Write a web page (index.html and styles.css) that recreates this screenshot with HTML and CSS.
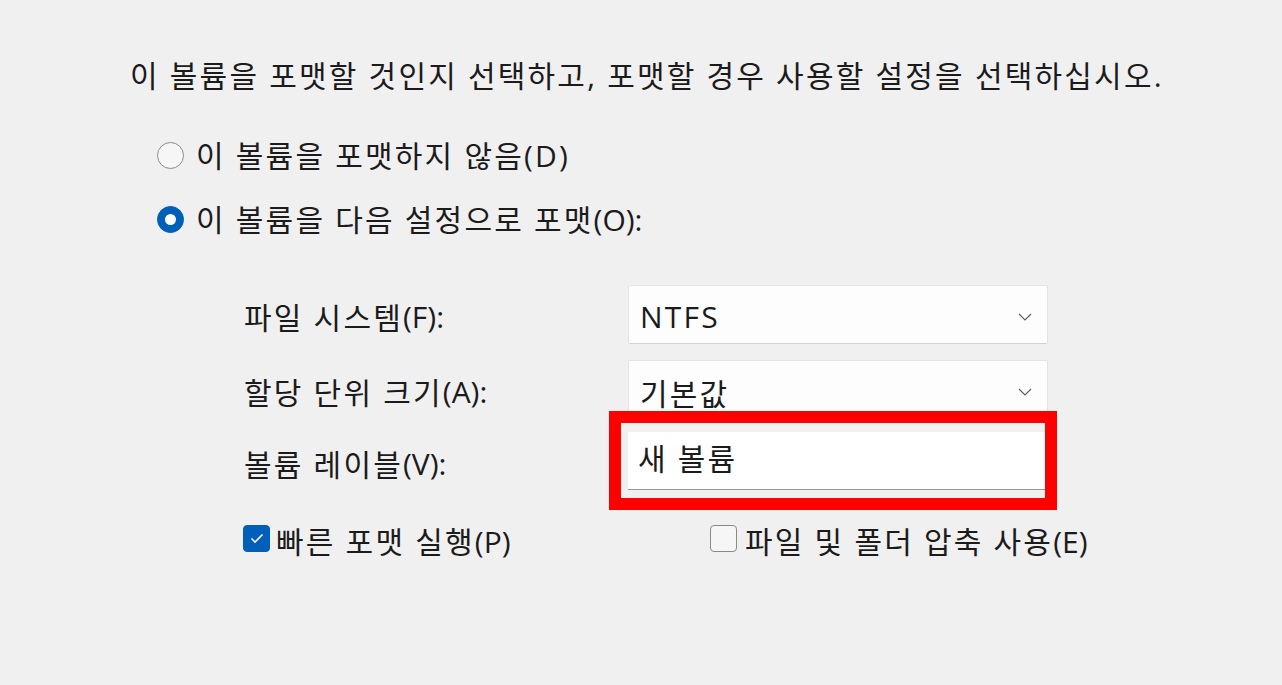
FILE: index.html
```html
<!DOCTYPE html>
<html lang="ko">
<head>
    <meta charset="UTF-8">
    <meta name="viewport" content="width=device-width, initial-scale=1.0">
    <title>파티션 포맷</title>
    <link rel="stylesheet" href="styles.css">
</head>
<body>
    <div class="page">
        <p class="intro">이 볼륨을 포맷할 것인지 선택하고, 포맷할 경우 사용할 설정을 선택하십시오.</p>

        <div class="radio-row">
            <span class="radio"></span>
            <span>이 볼륨을 포맷하지 않음(D)</span>
        </div>
        <div class="radio-row second">
            <span class="radio checked"></span>
            <span>이 볼륨을 다음 설정으로 포맷<span class="key">(O):</span></span>
        </div>

        <div class="settings">
            <div class="label">파일 시스템<span class="key">(F):</span></div>
            <div class="select">
                <span>NTFS</span>
                <svg class="chevron" width="14" height="8" viewBox="0 0 14 8"><polyline points="1,1 7,7 13,1" fill="none" stroke="#5f5f5f" stroke-width="1.2"/></svg>
            </div>

            <div class="label">할당 단위 크기<span class="key">(A):</span></div>
            <div class="select">
                <span>기본값</span>
                <svg class="chevron" width="14" height="8" viewBox="0 0 14 8"><polyline points="1,1 7,7 13,1" fill="none" stroke="#5f5f5f" stroke-width="1.2"/></svg>
            </div>

            <div class="label last">볼륨 레이블<span class="key">(V):</span></div>
            <div class="textbox">
                <span>새 볼륨</span>
                <div class="highlight"></div>
            </div>
        </div>

        <div class="checks">
            <div class="check-item first">
                <span class="box checked">
                    <svg width="14" height="11" viewBox="0 0 14 11"><polyline points="1.5,5.5 5,9 12.5,1.5" fill="none" stroke="#fff" stroke-width="1.6"/></svg>
                </span>
                <span>빠른 포맷 실행<span class="key">(P)</span></span>
            </div>
            <div class="check-item wide">
                <span class="box"></span>
                <span>파일 및 폴더 압축 사용<span class="key">(E)</span></span>
            </div>
        </div>
    </div>
</body>
</html>
```

FILE: styles.css
```css
body {
    margin: 0;
    background-color: #f0f0f0;
    font-family: "Open Sans", "Noto Sans CJK KR", sans-serif;
    font-size: 30px;
    letter-spacing: 2.2px;
    color: #1b1b1b;
}

.page {
    padding: 56px 0 0 130px;
    height: 629px;
}

.intro {
    margin: 0;
    line-height: 40px;
}

.key {
    letter-spacing: 0;
}

.radio-row {
    display: flex;
    align-items: center;
    gap: 12px;
    height: 40px;
    margin: 38px 0 0 27px;
}

.radio-row.second {
    margin-top: 24px;
}

.radio {
    width: 25px;
    height: 25px;
    border: 1.5px solid #8a8a8a;
    border-radius: 50%;
    background-color: #f6f6f6;
    flex-shrink: 0;
    margin-top: 2px;
}

.radio.checked {
    border-color: #005fb8;
    background-color: #005fb8;
    display: flex;
    justify-content: center;
    align-items: center;
}

.radio.checked::after {
    content: "";
    width: 11px;
    height: 11px;
    border-radius: 50%;
    background-color: #fff;
}

.settings {
    display: grid;
    grid-template-columns: 384px 420px;
    grid-template-rows: 59px 59px 59px;
    row-gap: 16px;
    margin: 47px 0 0 114px;
}

.label {
    display: flex;
    align-items: center;
    padding-top: 3px;
}

.label.last {
    margin-top: -6px;
}

.select {
    display: flex;
    align-items: center;
    justify-content: space-between;
    background-color: #fdfdfd;
    border: 1px solid #e3e3e3;
    border-bottom-color: #d2d2d2;
    border-radius: 2px;
    padding: 4px 15px 0 11px;
}

.textbox {
    position: relative;
    display: flex;
    align-items: center;
    background-color: #fff;
    border-top: 1px solid #f0f0f0;
    border-bottom: 1px solid #949494;
    margin: -4px 0 4px 0;
    padding: 0 0 7px 10px;
}

.highlight {
    position: absolute;
    left: -19px;
    top: -21px;
    width: 424px;
    height: 75px;
    border: 12px solid #ff0000;
}

.checks {
    display: flex;
    align-items: center;
    margin: 26px 0 0 113px;
}

.check-item {
    display: flex;
    align-items: center;
    gap: 6px;
    height: 40px;
}

.check-item.first {
    width: 467px;
}

.check-item.wide {
    gap: 8px;
}

.box {
    width: 25px;
    height: 25px;
    border: 1.5px solid #8a8a8a;
    border-radius: 4px;
    background-color: #f6f6f6;
    flex-shrink: 0;
    margin-top: -4px;
}

.box.checked {
    border-color: #005fb8;
    background-color: #005fb8;
    display: flex;
    justify-content: center;
    align-items: center;
}
```
